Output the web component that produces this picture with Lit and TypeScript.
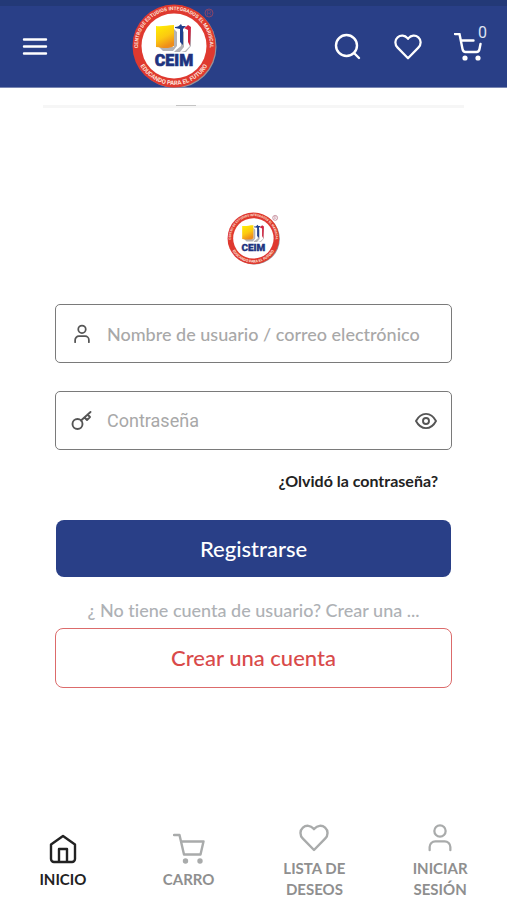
import { LitElement, html, svg, css } from "lit";
import { customElement, state } from "lit/decorators.js";

const heart = svg`<path d="M16 28 4.900 16.700C1.600 13.300 1.700 8.400 4.900 5.600 8 2.900 12.700 3.300 15.400 6.500L16 7.200 16.600 6.500C19.300 3.300 24 2.900 27.100 5.600 30.300 8.400 30.400 13.300 27.100 16.700Z"/>`;
const user = svg`<circle cx="16" cy="8.500" r="6"/><path d="M5 29v-3.500a6 6 0 0 1 6-6h10a6 6 0 0 1 6 6V29"/>`;

/** Round school seal: red ring with lettering, figures and acronym. */
@customElement("ceim-seal")
export class CeimSeal extends LitElement {
  static styles = css`
    :host { display: block; }
    svg { display: block; width: 100%; height: auto; overflow: visible; }
    .ring { font: 700 5px Roboto, "Liberation Sans", sans-serif; fill: #fde3db; }
    .motto { font-size: 6px; }
    .name { font: 900 16px Roboto, "Liberation Sans", sans-serif; fill: #20337f; stroke: #20337f; stroke-width: 0.6; }
  `;
  render() {
    return html`<svg viewBox="0 1 90 90" role="img" aria-label="CEIM">
      <defs>
        <path id="top" d="M10 57A36 36 0 1 1 78 57" />
        <path id="bottom" d="M5 45A39 39 0 0 0 83 45" />
        <linearGradient id="gold" x1="0" y1="0" x2="0.400" y2="1">
          <stop offset="0" stop-color="#fff100" /><stop offset="0.600" stop-color="#fcc911" /><stop offset="1" stop-color="#ee8d1c" />
        </linearGradient>
      </defs>
      <circle cx="45.500" cy="46" r="41" fill="#98949a" />
      <circle cx="44" cy="45" r="41.500" fill="#df392f" />
      <circle cx="44" cy="45" r="32.500" fill="#fff" />
      <text class="ring"><textPath href="#top" startOffset="50%" text-anchor="middle">CENTRO DE ESTUDIOS INTEGRADOS EL MARISCAL</textPath></text>
      <text class="ring motto"><textPath href="#bottom" startOffset="50%" text-anchor="middle">EDUCANDO PARA EL FUTURO</textPath></text>
      <path d="M29 46h15V28l3 3v14l-4 5H33zM46 49l5-4V28l3 3v15l-4 5h-6zM55 50l5-5V28l1 2v15l-5 6h-5z" fill="#b3b2b6" />
      <path d="M26 25c6 1 11-1 18-1v21c-5 3-11 2-18 1z" fill="url(#gold)" />
      <path d="M45 26c3 0 4-1 6-3l1 2h4l-3 3v16l-3-3V28l-5-1z" fill="#21418f" />
      <path d="M54 27c2-1 3-2 4-3l3 2-1 19-2-4V29z" fill="#cf2440" />
      <text class="name" x="44" y="65" text-anchor="middle">CEIM</text>
      <circle cx="79" cy="12" r="4" fill="none" stroke="#a04660" stroke-width="0.800" />
      <path d="M77.500 14.500v-5h2a1.300 1.300 0 0 1 0 2.700h-2m2 0 1.500 2.300" fill="none" stroke="#a04660" stroke-width="0.500" />
    </svg>`;
  }
}

@customElement("app-root")
export class AppRoot extends LitElement {
  @state() private visible = false;

  static styles = css`
    :host {
      display: flex; flex-direction: column; min-height: 100vh; background: #fff;
      font-family: "Lato Medium", Lato, "Noto Sans", sans-serif; font-weight: 500;
      font-variant-ligatures: none; color: #222;
    }
    * { box-sizing: border-box; }
    svg { display: block; fill: none; stroke: currentColor; stroke-linecap: round; stroke-linejoin: round; stroke-width: 2.4; }
    button { font: inherit; color: inherit; background: none; border: 0; padding: 0; margin: 0; cursor: pointer; }
    a { color: inherit; text-decoration: none; }
    .header {
      display: flex; align-items: center; height: 88px; padding: 0 20px 0 22px;
      background: #293f87; border-top: 6px solid #233977; border-bottom: 1px solid #7986b2; color: #fff;
    }
    .menu { width: 26px; }
    .brand { width: 90px; margin-left: 82px; }
    .tools { display: flex; gap: 32px; margin-left: auto; }
    .tools svg { width: 28px; height: 28px; }
    .cart { position: relative; margin-right: 5px; }
    .count { position: absolute; left: 24px; top: -8px; font: 400 16px/16px Roboto, sans-serif; color: #dfe4f2; }
    .rule { display: flex; justify-content: center; height: 3px; margin: 17px 43px 0; background: #f6f6f6; }
    .grip { width: 20px; height: 1px; margin-right: 136px; background: #c4c4c4; }
    .form { display: flex; flex-direction: column; margin: 0 55px; padding-top: 103px; }
    .seal { width: 56px; align-self: center; margin-bottom: 37px; }
    .field {
      display: flex; align-items: center; height: 59px; margin-bottom: 28px; padding: 0 14px 0 15px;
      border: 1px solid #7a7a7a; border-radius: 5px; color: #555;
    }
    .field svg { flex: none; width: 22px; height: 22px; stroke-width: 1.9; }
    .field .person { width: 20px; height: 20px; margin: 0 1px; stroke-width: 2.8; }
    input {
      flex: 1; min-width: 0; margin: 0 0 0 14px; padding: 0; border: 0; outline: 0; background: none;
      font: inherit; font-size: 18px; line-height: 24px; color: #333;
    }
    .secret { font-family: Roboto, sans-serif; font-weight: 400; }
    input::placeholder { color: #a8a8a8; opacity: 1; }
    .forgot {
      align-self: flex-end; margin: -7px 14px 29px 0;
      font-family: Lato, sans-serif; font-size: 16px; line-height: 20px; font-weight: 700;
    }
    .primary, .outline { border-radius: 8px; font-size: 22px; line-height: 28px; }
    .primary { height: 57px; margin: 0 1px; background: #293f87; color: #fff; }
    .hint { margin: 20px 0 5px; text-align: center; font-size: 18px; line-height: 26px; color: #aeb1b5; }
    .outline { height: 60px; border: 1px solid #dc6b6b; color: #d94a4a; }
    .nav {
      display: grid; grid-template-columns: repeat(4, 1fr); align-items: center;
      margin-top: auto; padding-right: 4px; color: #8f8f8f;
    }
    .tab {
      display: flex; flex-direction: column; align-items: center; gap: 4px; text-align: center;
      font-family: Lato, sans-serif; font-size: 15px; line-height: 21px; font-weight: 700;
    }
    .tab svg { width: 32px; height: 32px; color: #a9abab; }
    .active, .active svg { color: #222; }
    .label { max-width: 80px; }
  `;

  render() {
    return html`
      <header class="header">
        <button class="menu" aria-label="Menú">
          <svg viewBox="0 0 26 20"><path d="M2 2.500h22M2 9.500h22M2 16.500h22" /></svg>
        </button>
        <ceim-seal class="brand"></ceim-seal>
        <div class="tools">
          <button aria-label="Buscar">
            <svg viewBox="0 0 28 28"><circle cx="12.500" cy="12.500" r="10.500" /><path d="m20 20 5 5" /></svg>
          </button>
          <button aria-label="Lista de deseos"><svg viewBox="1 2 30 28">${heart}</svg></button>
          <button class="cart" aria-label="Carro">
            <svg viewBox="0 0 28 28">
              <path d="M1 1h4.500L8.500 16q.6 3 3 3h11q2.500 0 3-3l1-5M7.500 7.500h12" />
              <circle cx="11" cy="25" r="1.400" fill="currentColor" /><circle cx="24" cy="25" r="1.400" fill="currentColor" />
            </svg>
            <span class="count">0</span>
          </button>
        </div>
      </header>
      <div class="rule"><div class="grip"></div></div>

      <form class="form" @submit=${(e: Event) => e.preventDefault()}>
        <ceim-seal class="seal"></ceim-seal>
        <label class="field">
          <svg class="person" viewBox="0 0 32 32">${user}</svg>
          <input type="text" aria-label="Nombre de usuario / correo electrónico" placeholder="Nombre de usuario / correo electrónico" />
        </label>
        <div class="field">
          <svg viewBox="0 0 22 22">
            <circle cx="6.500" cy="14" r="5" /><path d="M10 10.500 19.500 2M13.500 7.500l2.500 2.500 3-3-2.500-2.500" />
          </svg>
          <input class="secret" type=${this.visible ? "text" : "password"} aria-label="Contraseña" placeholder="Contraseña" />
          <button type="button" aria-label="Mostrar contraseña" @click=${() => (this.visible = !this.visible)}>
            <svg viewBox="0 0 22 22">
              <path d="M1 11C6 1.500 16 1.500 21 11 16 20.500 6 20.500 1 11Z" /><circle cx="11" cy="11" r="3" />
            </svg>
          </button>
        </div>
        <a class="forgot" href="#">¿Olvidó la contraseña?</a>
        <button class="primary" type="submit">Registrarse</button>
        <p class="hint">¿ No tiene cuenta de usuario? Crear una ...</p>
        <button class="outline" type="button">Crear una cuenta</button>
      </form>

      <nav class="nav">
        <a class="tab active" href="#">
          <svg viewBox="0 0 32 32"><path d="M16 3 4 11.500V26a3 3 0 0 0 3 3h18a3 3 0 0 0 3-3V11.500ZM12 28.500V16h8v12.500" /></svg>
          <span class="label">INICIO</span>
        </a>
        <a class="tab" href="#">
          <svg viewBox="0 0 32 32">
            <path d="M1 2h5.500L11 21.500h16.500L30.500 8.500H8" />
            <circle cx="12.500" cy="28" r="1.500" fill="currentColor" /><circle cx="27" cy="28" r="1.500" fill="currentColor" />
          </svg>
          <span class="label">CARRO</span>
        </a>
        <a class="tab" href="#"><svg viewBox="0 0 32 32">${heart}</svg><span class="label">LISTA DE DESEOS</span></a>
        <a class="tab" href="#"><svg viewBox="-1 -1 34 34">${user}</svg><span class="label">INICIAR SESIÓN</span></a>
      </nav>
    `;
  }
}
